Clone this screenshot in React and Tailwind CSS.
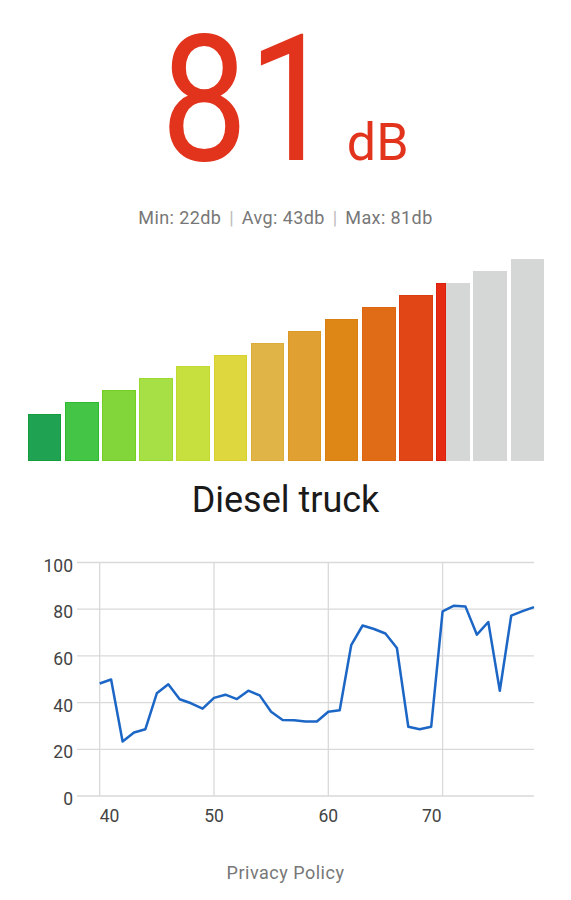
const levels = [
  { fill: "#1fa352", edge: "#149d3c" },
  { fill: "#45c545", edge: "#2eba2e" },
  { fill: "#82d63a", edge: "#74cf22" },
  { fill: "#a6e044", edge: "#9ad832" },
  { fill: "#c8e03e", edge: "#c0da30" },
  { fill: "#ded83e", edge: "#d8d030" },
  { fill: "#e0b446", edge: "#dcac38" },
  { fill: "#e0a032", edge: "#db9824" },
  { fill: "#de8616", edge: "#d98012" },
  { fill: "#e06c18", edge: "#dc6612" },
  { fill: "#e04616", edge: "#dc3c10" },
];

const history = [
  48.2, 49.9, 23.3, 27.2, 28.6, 44, 47.9, 41.4, 39.7, 37.4, 42, 43.4, 41.5,
  45.1, 43.1, 36.1, 32.6, 32.4, 31.9, 31.9, 36.1, 36.7, 64.6, 73, 71.5, 69.6,
  63.4, 29.7, 28.6, 29.7, 79.1, 81.5, 81.1, 69.1, 74.5, 45.1, 77.2, 79.2, 80.9,
];

function Meter({ partial }) {
  const bars = [];
  for (let i = 0; i < 14; i++) {
    const h = 47 + 11.9 * i;
    const lvl = levels[i];
    if (lvl) {
      bars.push(
        <div
          key={i}
          className="border"
          style={{ height: h, background: lvl.fill, borderColor: lvl.edge }}
        />
      );
    } else if (i === 11) {
      bars.push(
        <div key={i} className="flex bg-[#d5d6d6]" style={{ height: h }}>
          <div
            className="h-full bg-[#e52b12] border border-[#dc2010]"
            style={{ width: `${partial}%` }}
          />
        </div>
      );
    } else {
      bars.push(<div key={i} className="bg-[#d5d6d6]" style={{ height: h }} />);
    }
  }
  return (
    <div className="ml-[28px] mr-[27px] h-[202px] grid grid-cols-14 gap-x-[3.7px] items-end">
      {bars}
    </div>
  );
}

function HistoryChart() {
  const x0 = 99.7;
  const dx = 11.43;
  const y0 = 256;
  const dy = 2.335;
  const pts = history
    .map((v, i) => `${(x0 + i * dx).toFixed(1)},${(y0 - v * dy).toFixed(1)}`)
    .join(" ");
  const yTicks = [0, 20, 40, 60, 80, 100];
  const xTicks = [
    { v: 40, anchor: "start" },
    { v: 50, anchor: "middle" },
    { v: 60, anchor: "middle" },
    { v: 70, anchor: "end" },
  ];
  return (
    <svg width="571" height="290" viewBox="0 0 571 290" className="block mt-[18px] font-['Roboto']">
      {yTicks.map((t) => (
        <line key={t} x1="77" x2="534" y1={y0 - t * dy} y2={y0 - t * dy} stroke="#d9d9d9" strokeWidth="1.3" />
      ))}
      {xTicks.map((t) => {
        const x = x0 + (t.v - 40) * dx;
        return <line key={t.v} x1={x} x2={x} y1={y0 - 100 * dy} y2={y0} stroke="#d9d9d9" strokeWidth="1.3" />;
      })}
      {yTicks.map((t) => (
        <text key={t} x="73" y={y0 - t * dy + 9} textAnchor="end" fontSize="17.5" fill="#444">
          {t}
        </text>
      ))}
      {xTicks.map((t) => {
        const x = x0 + (t.v - 40) * dx;
        return (
          <text key={t.v} x={t.anchor === "end" ? x - 1 : x} y="281.5" textAnchor={t.anchor} fontSize="17.5" fill="#444">
            {t.v}
          </text>
        );
      })}
      <polyline points={pts} fill="none" stroke="#1c66c6" strokeWidth="2.5" strokeLinejoin="round" />
    </svg>
  );
}

export default function App() {
  return (
    <div className="w-[571px] h-[900px] bg-white font-['Roboto',sans-serif] overflow-hidden">
      <div className="h-[200px] flex items-baseline text-[#e2341d] pl-[149px]">
        <span className="inline-block text-[176px] leading-[200px] scale-x-[0.88]">81</span>
        <span className="text-[52px] leading-none">dB</span>
      </div>
      <div className="mt-[6px] text-center text-[18px] leading-[24px] tracking-[0.4px] text-[#777]">
        Min: 22db <span className="text-[#bbb] mx-[3px]">|</span> Avg: 43db{" "}
        <span className="text-[#bbb] mx-[3px]">|</span> Max: 81db
      </div>
      <div className="mt-[29px]">
        <Meter partial={28} />
      </div>
      <div className="mt-[17px] text-center text-[36px] leading-[44px] text-[#1a1a1a]">
        Diesel truck
      </div>
      <HistoryChart />
      <div className="mt-[31px] text-center text-[18px] leading-[24px] tracking-[0.5px] text-[#777]">
        Privacy Policy
      </div>
    </div>
  );
}
